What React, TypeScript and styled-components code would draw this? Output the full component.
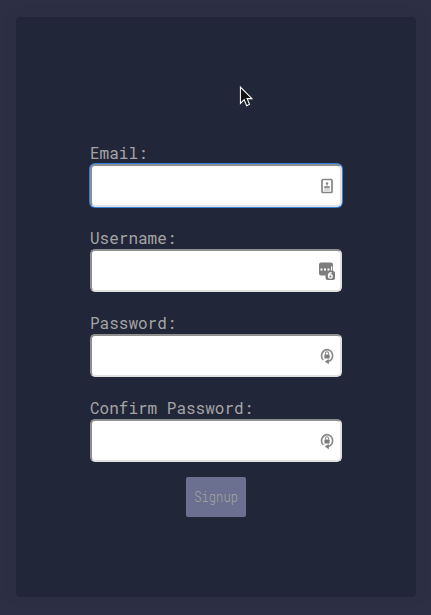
import React from 'react';
import styled, { createGlobalStyle, css } from 'styled-components';

const GlobalStyle = createGlobalStyle`
  *, *::before, *::after { box-sizing: border-box; }
  body {
    margin: 0;
    background: #2d3044;
    overflow: hidden;
    font-family: 'Roboto Mono', 'Liberation Mono', monospace;
  }
`;

const Page = styled.main`
  position: relative;
  height: 615px;
  padding: 17px 15px 18px 16px;
`;

const Card = styled.form`
  height: 580px;
  padding: 126px 74px 0;
  border-radius: 5px;
  background: #222639;
  box-shadow: 0 0 12px rgba(34, 38, 57, 0.2);
  display: flex;
  flex-direction: column;
  align-items: center;
`;

const Field = styled.label`
  display: block;
  width: 252px;
  height: 85px;
  color: #a5a5a5;
  font-size: 16px;
  line-height: 20px;
`;

const LabelText = styled.span`
  display: block;
  height: 21px;
  white-space: pre;
`;

const InputFrame = styled.span<{ $focused?: boolean }>`
  display: flex;
  align-items: center;
  width: 252px;
  height: 43px;
  padding-right: 4px;
  border: 2px solid;
  border-color: #8f8f8f #e0e1e1 #e0e1e1 #8f8f8f;
  border-radius: 5px;
  background: #fff;
  ${({ $focused }) => $focused && css`
    box-shadow: 0 0 0 1px #377fdf;
  `}
`;

const Input = styled.input`
  flex: 1;
  min-width: 0;
  height: 100%;
  padding: 0 8px;
  border: 0;
  outline: 0;
  background: transparent;
  caret-color: transparent;
  font: inherit;
`;

const Icon = styled.svg`
  display: block;
  flex: none;
  width: 18px;
  height: 20px;
`;

const SignupButton = styled.button`
  width: 60px;
  height: 40px;
  margin-top: -6px;
  padding: 0 0 1px;
  display: flex;
  align-items: center;
  justify-content: center;
  border: 0;
  border-radius: 2px;
  background: #6b7090;
  color: #a6a6a3;
  font-family: 'Roboto Mono', 'Liberation Mono', monospace;
  font-weight: 350;
  font-size: 14.5px;
`;

const SignupText = styled.span`
  display: block;
  transform: scaleX(0.84);
`;

const Pointer = styled.svg`
  position: absolute;
  left: 239px;
  top: 86px;
  width: 15px;
  height: 22px;
  pointer-events: none;
`;

const ContactIcon = () => (
  <Icon viewBox="0 0 18 20" fill="none">
    <rect x="4" y="3.5" width="10" height="13" rx="1" stroke="#858585" strokeWidth="1.7" />
    <circle cx="9" cy="7.5" r="1.3" fill="#858585" />
    <path d="M9 8.5v2M6.5 12v-1.5h5V12zM6 14h6" fill="#858585" stroke="#999" strokeWidth=".8" />
  </Icon>
);

const VaultIcon = () => (
  <Icon viewBox="0 0 18 20">
    <rect x="1" y="1.5" width="14" height="13" rx="2" fill="#7d7d7d" />
    <path d="M2.5 7.5h2v2h-2zM6 7.5h2v2H6zM9.5 7.5h2v2h-2zM13 5.5h1.2v4H13z" fill="#fff" />
    <rect x="7.5" y="10" width="9.5" height="9" rx="2" fill="#7d7d7d" />
    <path d="M13.7 11.6q-3.2.2-3.2 3.2" fill="none" stroke="#fff" strokeWidth="1.4" />
    <ellipse cx="12.4" cy="15.4" rx="1.8" ry="1.7" fill="none" stroke="#fff" strokeWidth="1.4" />
  </Icon>
);

const LockIcon = () => (
  <Icon viewBox="0 0 18 20" fill="none">
    <path d="M5.2 14A5.6 6 0 1 1 10 15.6" stroke="#898989" strokeWidth="1.7" />
    <path d="M10.8 13v5.2L6.8 15.6z" fill="#808080" />
    <rect x="6.4" y="8.5" width="5.2" height="4" rx=".5" fill="#7d7d7d" />
    <path d="M7.5 8.5V7.3a1.5 1.5 0 0 1 3 0v1.2" stroke="#858585" strokeWidth="1.1" />
  </Icon>
);

const fields = [
  { name: 'email', label: 'Email:', type: 'email', Glyph: ContactIcon, focused: true },
  { name: 'username', label: 'Username:', type: 'text', Glyph: VaultIcon, focused: false },
  { name: 'password', label: 'Password:', type: 'password', Glyph: LockIcon, focused: false },
  { name: 'confirm', label: 'Confirm Password:', type: 'password', Glyph: LockIcon, focused: false },
];

export default function App() {
  return (
    <>
      <GlobalStyle />
      <Page>
        <Card onSubmit={(event: React.FormEvent) => event.preventDefault()}>
          {fields.map(({ name, label, type, Glyph, focused }) => (
            <Field key={name}>
              <LabelText>{label}</LabelText>
              <InputFrame $focused={focused}>
                <Input name={name} type={type} />
                <Glyph />
              </InputFrame>
            </Field>
          ))}
          <SignupButton type="submit" disabled><SignupText>Signup</SignupText></SignupButton>
        </Card>
        <Pointer viewBox="0 0 16 22" preserveAspectRatio="none">
          <path d="M1.5 1v16.5l4-3.8 2.7 6 3-1.4-2.6-5.7h5.2z" fill="#111" stroke="#fff" strokeWidth="1.1" />
        </Pointer>
      </Page>
    </>
  );
}
